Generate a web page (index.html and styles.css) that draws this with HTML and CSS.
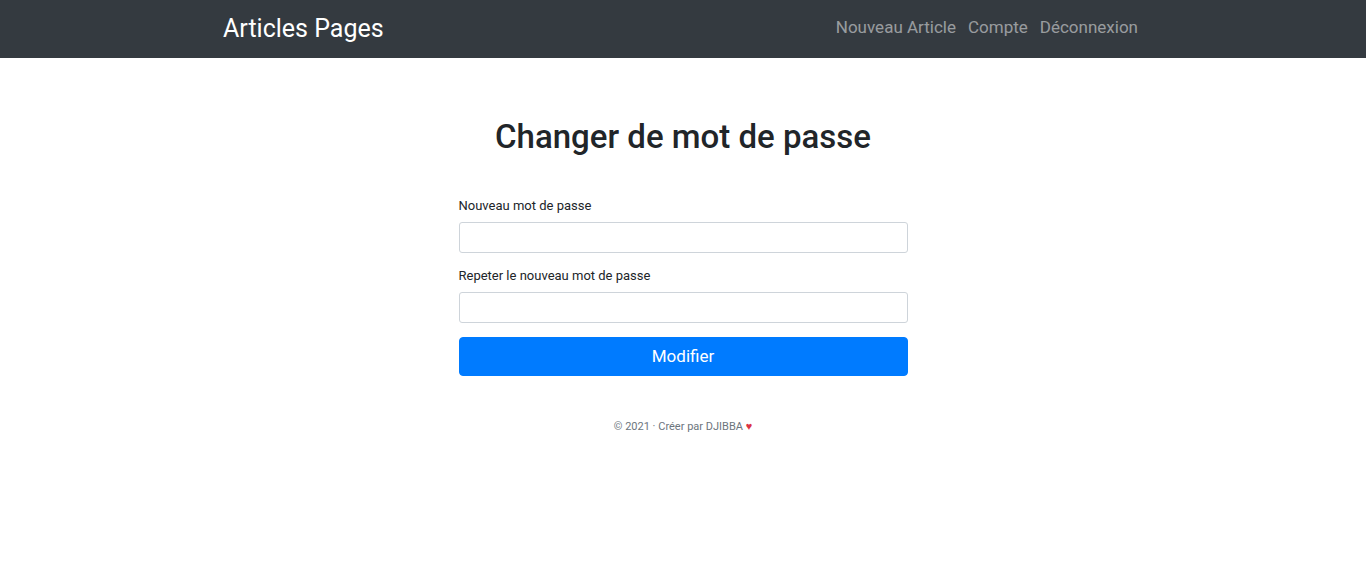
FILE: index.html
```html
<!DOCTYPE html>
<html lang="fr">
<head>
<meta charset="utf-8">
<meta name="viewport" content="width=device-width, initial-scale=1">
<title>Changer de mot de passe</title>
<link rel="stylesheet" href="styles.css">
</head>
<body>
<header class="navbar">
  <div class="navbar-inner">
    <a class="brand" href="#">Articles Pages</a>
    <nav class="nav">
      <a class="nav-link" href="#">Nouveau Article</a>
      <a class="nav-link" href="#">Compte</a>
      <a class="nav-link" href="#">Déconnexion</a>
    </nav>
  </div>
</header>
<main class="content">
  <h1 class="title">Changer de mot de passe</h1>
  <form class="form">
    <div class="field">
      <label class="label" for="password">Nouveau mot de passe</label>
      <input class="input" id="password" type="password">
    </div>
    <div class="field">
      <label class="label" for="password-repeat">Repeter le nouveau mot de passe</label>
      <input class="input" id="password-repeat" type="password">
    </div>
    <button class="button" type="submit">Modifier</button>
  </form>
</main>
<footer class="footer">© 2021 · Créer par DJIBBA <span class="heart">♥</span></footer>
</body>
</html>
```

FILE: styles.css
```css
*, *::before, *::after {
  box-sizing: border-box;
}

body {
  margin: 0;
  background: #fff;
  color: #212529;
  font-family: Roboto, "Liberation Sans", sans-serif;
  font-size: 13px;
  line-height: 20px;
}

.navbar {
  background: #343a40;
  padding: 7px 16px;
}

.navbar-inner {
  display: flex;
  align-items: flex-start;
  justify-content: space-between;
  max-width: 920px;
  margin: 0 auto;
}

.brand {
  color: #fff;
  font-size: 25px;
  line-height: 44px;
  text-decoration: none;
}

.nav {
  display: flex;
  gap: 12px;
  padding-right: 5px;
}

.nav-link {
  color: rgba(255, 255, 255, 0.5);
  font-size: 17px;
  line-height: 40px;
  text-decoration: none;
}

.content {
  padding: 59px 16px 40px;
}

.title {
  margin: 0 0 39px;
  font-size: 33px;
  font-weight: 500;
  line-height: 40px;
  text-align: center;
}

.form {
  max-width: 449px;
  margin: 0 auto;
}

.field {
  display: flex;
  flex-direction: column;
  gap: 6px;
  margin-bottom: 13px;
}

.label {
  line-height: 20px;
}

.input {
  width: 100%;
  height: 31px;
  padding: 5px 10px;
  border: 1px solid #ced4da;
  border-radius: 3px;
  background: #fff;
  color: #495057;
  font: inherit;
}

.button {
  display: block;
  width: 100%;
  margin-top: 14px;
  padding: 7px 16px;
  border: 1px solid #007bff;
  border-radius: 4px;
  background: #007bff;
  color: #fff;
  font-family: inherit;
  font-size: 17px;
  line-height: 23px;
}

.footer {
  padding: 1px 16px 16px;
  color: #6c757d;
  font-size: 11px;
  line-height: 20px;
  text-align: center;
}

.heart {
  color: #dc3545;
}
```
